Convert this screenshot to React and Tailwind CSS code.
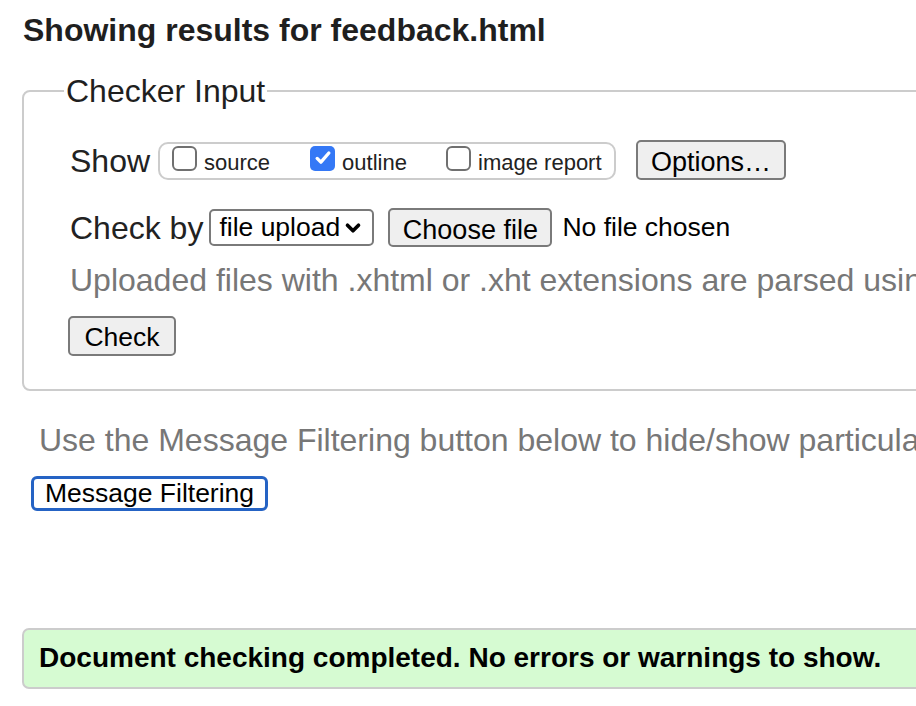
import { ChevronDown } from 'lucide-react'

function Box({ checked }) {
  return checked ? (
    <span className="w-[25px] h-[25px] rounded-[5px] bg-[#3478f6] flex items-center justify-center shrink-0">
      <svg viewBox="0 0 24 24" className="w-[20px] h-[20px]" fill="none" stroke="white" strokeWidth={4} strokeLinecap="round" strokeLinejoin="round">
        <path d="M5 12.5l4.5 4.5L19 6" />
      </svg>
    </span>
  ) : (
    <span className="block w-[25px] h-[25px] rounded-[6px] border-2 border-[#707070] bg-white shrink-0" />
  )
}

const opts = [
  { label: 'source', checked: false, w: 'w-[138px]' },
  { label: 'outline', checked: true, w: 'w-[136px]' },
  { label: 'image report', checked: false, w: '' },
]

export default function App() {
  return (
    <div className="w-[916px] h-[706px] overflow-hidden bg-white text-[#222] font-['Liberation_Sans',Arial,sans-serif]">
      <div className="w-[1400px]">
        <h1 className="pt-[11px] pl-[23px] text-[32px] leading-[38px] font-bold text-[#1f1f1f]">
          Showing results for feedback.html
        </h1>

        {/* Checker Input */}
        <fieldset className="mt-[24px] ml-[22px] border-2 border-[#cccccc] rounded-[8px] pl-[46px] pr-4 pt-[33px] pb-[33px]">
          <legend className="-ml-[6px] px-[2px] text-[32px] leading-[36px] text-[#1f1f1f]">Checker Input</legend>

          <div className="flex items-center">
            <span className="text-[32px] leading-[38px] mr-[8px]">Show</span>
            <div className="flex items-center h-[38px] w-[458px] border-2 border-[#cccccc] rounded-[10px] pl-[12px]">
              {opts.map(o => (
                <div key={o.label} className={`flex items-center ${o.w}`}>
                  <span className="block -mt-[6px]"><Box checked={o.checked} /></span>
                  <span className="ml-[7px] text-[22px] leading-[26px] mt-[4px]">{o.label}</span>
                </div>
              ))}
            </div>
            <button className="ml-[20px] -mt-[2px] h-[40px] w-[150px] bg-[#efefef] border-2 border-[#7a7a7a] rounded-[5px] text-[27px] text-black">
              Options…
            </button>
          </div>

          <div className="flex items-center mt-[28px]">
            <span className="text-[32px] leading-[38px] mr-[6px]">Check by</span>
            <div className="h-[37px] w-[165px] border-2 border-[#7a7a7a] rounded-[5px] flex items-center pl-[8px] bg-white">
              <span className="text-[26.5px] text-black">file upload</span>
              <ChevronDown className="w-[22px] h-[22px] ml-[2px] text-black" strokeWidth={4} />
            </div>
            <button className="ml-[14px] h-[39px] w-[164px] bg-[#efefef] border-2 border-[#7a7a7a] rounded-[5px] text-[27px] text-black">
              Choose file
            </button>
            <span className="ml-[10px] text-[26.5px] text-black">No file chosen</span>
          </div>

          <p className="mt-[13px] text-[32px] leading-[38px] text-[#777777] whitespace-nowrap">
            Uploaded files with .xhtml or .xht extensions are parsed using the XML parser.
          </p>

          <button className="mt-[17px] -ml-[2px] h-[40px] w-[108px] bg-[#efefef] border-2 border-[#7a7a7a] rounded-[5px] text-[26.5px] text-black">
            Check
          </button>
        </fieldset>

        <p className="mt-[30px] ml-[39px] text-[32px] leading-[38px] text-[#777777] whitespace-nowrap">
          Use the Message Filtering button below to hide/show particular messages, and to see total counts of errors and warnings.
        </p>

        <button className="mt-[17px] ml-[31px] h-[35px] w-[237px] bg-white border-[3px] border-[#2563c4] rounded-[6px] text-[26.5px] leading-none text-black">
          Message Filtering
        </button>

        <div className="mt-[117px] ml-[22px] h-[61px] bg-[#d6fbd2] border-2 border-[#cccccc] rounded-[7px] flex items-center pl-[15px]">
          <span className="text-[28px] font-bold text-black">
            Document checking completed. No errors or warnings to show.
          </span>
        </div>
      </div>
    </div>
  )
}
